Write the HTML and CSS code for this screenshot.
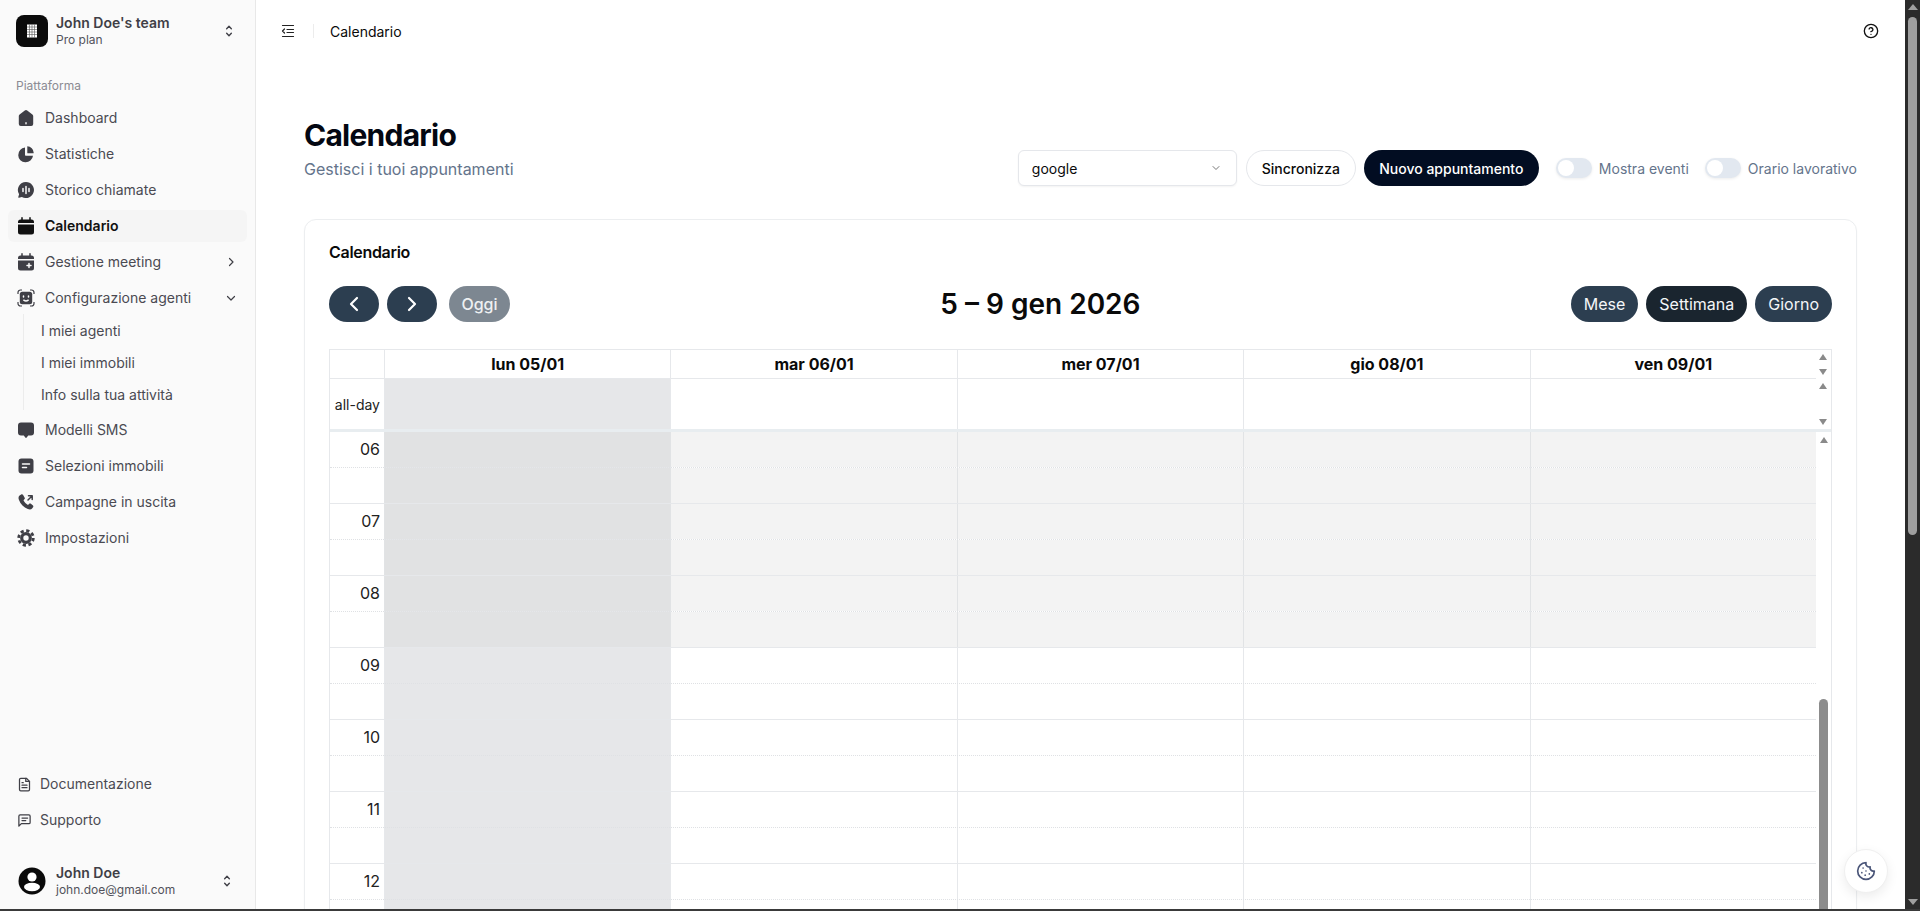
FILE: index.html
```html
<!DOCTYPE html>
<html lang="it">
<head>
<meta charset="UTF-8">
<meta name="viewport" content="width=device-width, initial-scale=1.0">
<title>Calendario</title>
<link rel="stylesheet" href="styles.css">
</head>
<body>

<div class="app">

  <aside class="sidebar">
    <div class="team">
      <div class="team-logo">
        <svg width="12" height="14" viewBox="0 0 12 14"><rect x="1" y="0.5" width="10" height="13" fill="#fff"/><path d="M3.5 .5v13M6 .5v13M8.5 .5v13M1 3h10M1 5.500h10M1 8h10M1 10.500h10" stroke="#555" stroke-width=".6"/></svg>
      </div>
      <div class="team-text">
        <div class="team-name">John Doe's team</div>
        <div class="team-plan">Pro plan</div>
      </div>
      <svg class="updown" width="14" height="16" viewBox="0 0 24 24" fill="none" stroke="#3f3f46" stroke-width="2.400" stroke-linecap="round" stroke-linejoin="round"><path d="m8 16 4 4 4-4"/><path d="m8 8 4-4 4 4"/></svg>
    </div>

    <div class="nav-label">Piattaforma</div>
    <nav class="nav">
      <a class="nav-item">
        <svg class="nav-icon" viewBox="0 0 18 18"><path d="M7.800 1.400a2 2 0 0 1 2.400 0l5.200 4a2 2 0 0 1 .8 1.600V15a2 2 0 0 1-2 2H3.800a2 2 0 0 1-2-2V7a2 2 0 0 1 .8-1.600z"/><rect class="cut" x="8.300" y="13" width="1.400" height="2.400" rx=".7"/></svg>
        Dashboard
      </a>
      <a class="nav-item">
        <svg class="nav-icon" viewBox="0 0 18 18"><path d="M8 2.600a7.400 7.400 0 1 0 8 8.200H8.800a.8.800 0 0 1-.8-.8z"/><path d="M10.300 1.300a6.600 6.600 0 0 1 6.400 6.400.6.600 0 0 1-.6.600h-5.200a.6.600 0 0 1-.6-.6z"/></svg>
        Statistiche
      </a>
      <a class="nav-item">
        <svg class="nav-icon" viewBox="0 0 18 18"><path d="M9 1a8 8 0 1 1-4.100 14.900L2 16.800a.6.600 0 0 1-.7-.8l.8-2.800A8 8 0 0 1 9 1z"/><path class="cut-line" d="M6 7.500v3M9 5.500v7M12 7.500v3"/></svg>
        Storico chiamate
      </a>
      <a class="nav-item active">
        <svg class="nav-icon" viewBox="0 0 18 18"><path d="M5 .8v2.600M13 .8v2.600" stroke="#111" stroke-width="1.500" stroke-linecap="round"/><path d="M3.500 2.500h11a2.500 2.500 0 0 1 2.500 2.500v1H1V5a2.500 2.500 0 0 1 2.500-2.500z"/><path d="M1 7.500h16V15a2.500 2.500 0 0 1-2.500 2.500h-11A2.500 2.500 0 0 1 1 15z"/></svg>
        Calendario
      </a>
      <a class="nav-item">
        <svg class="nav-icon" viewBox="0 0 18 18"><path d="M5 .8v2.600M13 .8v2.600" stroke="#3f3f46" stroke-width="1.500" stroke-linecap="round"/><path d="M3.500 2.500h11a2.500 2.500 0 0 1 2.500 2.500v1H1V5a2.500 2.500 0 0 1 2.500-2.500z"/><path d="M1 7.500h16V15a2.500 2.500 0 0 1-2.500 2.500h-11A2.500 2.500 0 0 1 1 15z"/><path class="cut-line" d="M12 10.500v4M10 12.500h4"/></svg>
        Gestione meeting
        <svg class="nav-chevron" width="12" height="12" viewBox="0 0 24 24"><path d="m9 5 7 7-7 7"/></svg>
      </a>
      <a class="nav-item">
        <svg class="nav-icon" viewBox="0 0 18 18"><path d="M1 5V3.500A2.500 2.500 0 0 1 3.500 1H5M13 1h1.500A2.500 2.500 0 0 1 17 3.500V5M17 13v1.500a2.500 2.500 0 0 1-2.500 2.500H13M5 17H3.500A2.500 2.500 0 0 1 1 14.500V13" fill="none" stroke="#3f3f46" stroke-width="1.200"/><rect x="2.800" y="2.800" width="12.400" height="12.400" rx="2.500"/><path class="cut-line" d="M6.500 7v1M11.500 7v1M6.800 11.200c1.300 1 3.100 1 4.400 0"/></svg>
        Configurazione agenti
        <svg class="nav-chevron" width="12" height="12" viewBox="0 0 24 24"><path d="m5 9 7 7 7-7"/></svg>
      </a>
      <div class="subnav">
        <a class="subnav-item">I miei agenti</a>
        <a class="subnav-item">I miei immobili</a>
        <a class="subnav-item">Info sulla tua attività</a>
      </div>
      <a class="nav-item">
        <svg class="nav-icon" viewBox="0 0 18 18"><path d="M4 1.500h10A3 3 0 0 1 17 4.500v7a3 3 0 0 1-3 3h-2.800L9.700 16.500a.9.900 0 0 1-1.400 0L6.800 14.500H4a3 3 0 0 1-3-3v-7a3 3 0 0 1 3-3z"/></svg>
        Modelli SMS
      </a>
      <a class="nav-item">
        <svg class="nav-icon" viewBox="0 0 18 18"><rect x="1.500" y="1.500" width="15" height="15" rx="3"/><path class="cut-line" d="M5.500 7h7M5.500 10.500h4"/></svg>
        Selezioni immobili
      </a>
      <a class="nav-item">
        <svg class="nav-icon" viewBox="0 0 18 18"><path d="M4.200 1.500 2.600 2.400C1.400 3.300 1.200 5 2 7c1.500 4 4.800 7.500 8.800 9 1.900.7 3.500.5 4.500-.8l.9-1.300c.3-.5.2-1-.2-1.400l-2.400-1.900c-.4-.3-1-.3-1.400.1l-1.200 1.200c-2-1-3.500-2.600-4.500-4.600l1.100-1.200c.4-.4.4-1 .1-1.400L6 1.800c-.4-.6-1.200-.7-1.800-.3z"/><path d="M11 7l4-4M11.500 2.800H15.200V6.500" fill="none" stroke="#3f3f46" stroke-width="1.500" stroke-linecap="round" stroke-linejoin="round" stroke-dasharray="none"/></svg>
        Campagne in uscita
      </a>
      <a class="nav-item">
        <svg class="nav-icon" viewBox="0 0 18 18"><circle cx="9" cy="9" r="7.300" fill="none" stroke="#3f3f46" stroke-width="2.800" stroke-dasharray="3.200 2.530"/><circle cx="9" cy="9" r="4.300" fill="none" stroke="#3f3f46" stroke-width="3.200"/></svg>
        Impostazioni
      </a>
    </nav>

    <div class="sidebar-spacer"></div>

    <nav class="nav-bottom">
      <a class="nav-item small">
        <svg class="nav-icon-line" viewBox="0 0 24 24"><path d="M15 2H6a2 2 0 0 0-2 2v16a2 2 0 0 0 2 2h12a2 2 0 0 0 2-2V7z"/><path d="M14 2v5h6"/><path d="M16 13H8M16 17H8M10 9H8"/></svg>
        Documentazione
      </a>
      <a class="nav-item small">
        <svg class="nav-icon-line" viewBox="0 0 24 24"><path d="M21 15a2 2 0 0 1-2 2H7l-4 4V5a2 2 0 0 1 2-2h14a2 2 0 0 1 2 2z"/><path d="M8 8h9M8 12h6"/></svg>
        Supporto
      </a>
    </nav>

    <div class="user">
      <svg class="avatar" viewBox="0 0 28 28"><circle cx="14" cy="14" r="13.500" fill="#0a0a0a"/><circle cx="14" cy="10" r="4.600" fill="#fff"/><ellipse cx="14" cy="20" rx="8" ry="4.200" fill="#fff"/></svg>
      <div class="user-text">
        <div class="team-name">John Doe</div>
        <div class="team-plan">john.doe@gmail.com</div>
      </div>
      <svg class="updown" width="14" height="16" viewBox="0 0 24 24" fill="none" stroke="#3f3f46" stroke-width="2.400" stroke-linecap="round" stroke-linejoin="round"><path d="m8 16 4 4 4-4"/><path d="m8 8 4-4 4 4"/></svg>
    </div>
  </aside>

  <main class="main">
    <header class="topbar">
      <svg class="topbar-toggle" width="14" height="14" viewBox="0 0 14 14" fill="none" stroke="#222" stroke-width="1.200" stroke-linecap="round" stroke-linejoin="round"><path d="M1.500 1.500h11M6 5.500h6.500M6 8.500h6.500M1.500 12.500h11"/><path d="M3.500 5 1.500 7l2 2"/></svg>
      <span class="topbar-sep"></span>
      <span class="topbar-title">Calendario</span>
      <svg class="topbar-help" width="16" height="16" viewBox="0 0 24 24" fill="none" stroke="#111" stroke-width="2" stroke-linecap="round" stroke-linejoin="round"><circle cx="12" cy="12" r="10"/><path d="M9.100 9a3 3 0 0 1 5.800 1c0 2-3 3-3 3"/><path d="M12 17h.01"/></svg>
    </header>

    <div class="content">
      <div class="page-head">
        <div>
          <h1 class="page-title">Calendario</h1>
          <p class="page-sub">Gestisci i tuoi appuntamenti</p>
        </div>
        <div class="controls">
          <button class="select">
            google
            <svg width="12" height="12" viewBox="0 0 24 24" fill="none" stroke="#777" stroke-width="2" stroke-linecap="round" stroke-linejoin="round"><path d="m6 9 6 6 6-6"/></svg>
          </button>
          <button class="btn btn-outline">Sincronizza</button>
          <button class="btn btn-dark">Nuovo appuntamento</button>
          <label class="switch first"><span class="switch-track"><span class="switch-knob"></span></span>Mostra eventi</label>
          <label class="switch"><span class="switch-track"><span class="switch-knob"></span></span>Orario lavorativo</label>
        </div>
      </div>

      <section class="card">
        <h2 class="card-title">Calendario</h2>

        <div class="cal-toolbar">
          <div class="cal-group">
            <button class="cal-btn cal-arrow"><svg width="14" height="18" viewBox="0 0 14 18" fill="none" stroke="#fff" stroke-width="2.200" stroke-linecap="round" stroke-linejoin="round"><path d="M10 3 4 9l6 6"/></svg></button>
            <button class="cal-btn cal-arrow"><svg width="14" height="18" viewBox="0 0 14 18" fill="none" stroke="#fff" stroke-width="2.200" stroke-linecap="round" stroke-linejoin="round"><path d="m4 3 6 6-6 6"/></svg></button>
            <button class="cal-btn cal-today">Oggi</button>
          </div>
          <div class="cal-title">5 – 9 gen 2026</div>
          <div class="cal-group">
            <button class="cal-btn">Mese</button>
            <button class="cal-btn current">Settimana</button>
            <button class="cal-btn">Giorno</button>
          </div>
        </div>

        <div class="cal">
          <div class="cal-row cal-head">
            <div class="cell"></div>
            <div class="cell">lun 05/01</div>
            <div class="cell">mar 06/01</div>
            <div class="cell">mer 07/01</div>
            <div class="cell">gio 08/01</div>
            <div class="cell">ven 09/01</div>
            <div class="gutter between"><span class="tri-up"></span><span class="tri-down"></span></div>
          </div>
          <div class="cal-row cal-allday">
            <div class="cell axis-small">all-day</div>
            <div class="cell past"></div>
            <div class="cell"></div>
            <div class="cell"></div>
            <div class="cell"></div>
            <div class="cell"></div>
            <div class="gutter between"><span class="tri-up"></span><span class="tri-down"></span></div>
          </div>

          <div class="cal-body">
            <div class="slots">
              <div class="day-cols">
                <div class="day past"></div>
                <div class="day"></div>
                <div class="day"></div>
                <div class="day"></div>
                <div class="day"></div>
              </div>
              <div class="slot hour off"><div class="slot-axis">06</div><div class="lane"></div></div>
              <div class="slot off"><div class="slot-axis"></div><div class="lane"></div></div>
              <div class="slot hour off"><div class="slot-axis">07</div><div class="lane"></div></div>
              <div class="slot off"><div class="slot-axis"></div><div class="lane"></div></div>
              <div class="slot hour off"><div class="slot-axis">08</div><div class="lane"></div></div>
              <div class="slot off"><div class="slot-axis"></div><div class="lane"></div></div>
              <div class="slot hour"><div class="slot-axis">09</div><div class="lane"></div></div>
              <div class="slot"><div class="slot-axis"></div><div class="lane"></div></div>
              <div class="slot hour"><div class="slot-axis">10</div><div class="lane"></div></div>
              <div class="slot"><div class="slot-axis"></div><div class="lane"></div></div>
              <div class="slot hour"><div class="slot-axis">11</div><div class="lane"></div></div>
              <div class="slot"><div class="slot-axis"></div><div class="lane"></div></div>
              <div class="slot hour"><div class="slot-axis">12</div><div class="lane"></div></div>
              <div class="slot"><div class="slot-axis"></div><div class="lane"></div></div>
            </div>
            <div class="gutter body-gutter">
              <span class="tri-up"></span>
              <span class="inner-thumb"></span>
            </div>
          </div>
        </div>
      </section>
    </div>

    <button class="cookie">
      <svg width="20" height="20" viewBox="0 0 24 24" fill="none" stroke="#4a5578" stroke-width="2" stroke-linecap="round" stroke-linejoin="round"><path d="M12 2a10 10 0 1 0 10 10 4 4 0 0 1-5-5 4 4 0 0 1-5-5"/><path d="M8.500 8.500v.01M16 15.500v.01M12 12v.01M11 17v.01M7 14v.01"/></svg>
    </button>
  </main>

  <div class="page-scroll">
    <span class="tri-up"></span>
    <span class="page-thumb"></span>
    <span class="tri-down"></span>
  </div>

</div>

</body>
</html>
```
FILE: styles.css
```css
* {
  box-sizing: border-box;
}
html, body {
  margin: 0;
  padding: 0;
  height: 100%;
  overflow: hidden;
}
body {
  font-family: Inter, 'Liberation Sans', sans-serif;
  font-size: 14px;
  color: #0a0a0a;
  background-color: #fff;
}
button {
  font-family: inherit;
  cursor: pointer;
}
.app {
  display: flex;
  height: 911px;
  overflow: hidden;
  border-bottom: 2px solid #3a3a3a;
}

/* sidebar */
.sidebar {
  width: 256px;
  flex-shrink: 0;
  display: flex;
  flex-direction: column;
  background-color: #fafafa;
  border-right: 1px solid #e8e8e8;
}
.team {
  display: flex;
  align-items: center;
  height: 32px;
  margin: 15px 0 0 16px;
  padding-right: 16px;
}
.team-logo {
  width: 32px;
  height: 32px;
  border-radius: 8px;
  background-color: #0b0b0b;
  display: flex;
  align-items: center;
  justify-content: center;
  flex-shrink: 0;
}
.team-text {
  margin-left: 8px;
  flex: 1;
}
.team-name {
  font-size: 14px;
  font-weight: 600;
  line-height: 18px;
  color: #3f3f46;
}
.team-plan {
  font-size: 12px;
  line-height: 16px;
  color: #52525b;
}
.updown {
  margin-right: 3px;
}
.nav-label {
  margin: 31px 0 0 16px;
  font-size: 12px;
  line-height: 16px;
  color: #8b8b93;
}
.nav, .nav-bottom {
  display: flex;
  flex-direction: column;
  gap: 4px;
  padding: 0 8px;
}
.nav {
  margin-top: 8px;
}
.nav-item {
  display: flex;
  align-items: center;
  height: 32px;
  padding: 0 9px;
  border-radius: 6px;
  color: #4a4a52;
  line-height: 20px;
}
.nav-item.active {
  background-color: #f5f5f5;
  color: #111;
  font-weight: 600;
}
.nav-item.active .nav-icon {
  fill: #111;
}
.nav-icon {
  width: 18px;
  height: 18px;
  margin-right: 10px;
  fill: #3f3f46;
  flex-shrink: 0;
}
.nav-icon .cut {
  fill: #fafafa;
}
.nav-icon .cut-line {
  fill: none;
  stroke: #fafafa;
  stroke-width: 1.500;
  stroke-linecap: round;
}
.nav-chevron {
  margin-left: auto;
  margin-right: 1px;
  fill: none;
  stroke: #3f3f46;
  stroke-width: 2.400;
  stroke-linecap: round;
  stroke-linejoin: round;
}
.subnav {
  display: flex;
  flex-direction: column;
  margin: -4px 0 0 15px;
  padding-left: 17px;
  border-left: 1px solid #ececec;
}
.subnav-item {
  height: 32px;
  display: flex;
  align-items: center;
  color: #4a4a52;
}
.sidebar-spacer {
  flex: 1;
}
.nav-item.small {
  padding-left: 9px;
}
.nav-icon-line {
  width: 15px;
  height: 15px;
  margin-right: 8px;
  fill: none;
  stroke: #3f3f46;
  stroke-width: 2;
  stroke-linecap: round;
  stroke-linejoin: round;
}
.user {
  display: flex;
  align-items: center;
  height: 32px;
  margin: 29px 0 12px 18px;
  padding-right: 18px;
}
.avatar {
  width: 28px;
  height: 28px;
  flex-shrink: 0;
}
.user-text {
  margin-left: 10px;
  flex: 1;
}

/* main column */
.main {
  position: relative;
  flex: 1;
  min-width: 0;
}
.topbar {
  display: flex;
  align-items: center;
  height: 62px;
  padding: 0 26px 0 25px;
}
.topbar-sep {
  width: 1px;
  height: 14px;
  margin: 0 16px 0 18px;
  background-color: #ececec;
}
.topbar-help {
  margin-left: auto;
}
.content {
  padding: 55px 48px 0;
}
.page-head {
  display: flex;
  justify-content: space-between;
  align-items: flex-end;
  height: 69px;
}
.page-title {
  margin: 0;
  font-size: 30px;
  font-weight: 700;
  line-height: 36px;
  letter-spacing: -0.75px;
  color: #030712;
}
.page-sub {
  margin: 4px 0 5px;
  font-size: 16px;
  line-height: 24px;
  color: #64748b;
}
.controls {
  display: flex;
  align-items: center;
}
.select {
  width: 219px;
  height: 36px;
  padding: 0 14px 0 13px;
  display: flex;
  align-items: center;
  justify-content: space-between;
  background-color: #fff;
  border: 1px solid #e5e7eb;
  border-radius: 6px;
  box-shadow: 0 1px 2px rgba(0, 0, 0, 0.05);
  font-size: 14px;
  color: #0a0a0a;
}
.btn {
  height: 36px;
  border-radius: 18px;
  font-size: 14px;
  font-weight: 500;
}
.btn-outline {
  width: 110px;
  margin-left: 9px;
  background-color: #fff;
  border: 1px solid #e5e7eb;
  color: #0a0a0a;
}
.btn-dark {
  width: 175px;
  margin-left: 8px;
  background-color: #020d22;
  border: none;
  color: #fff;
}
.switch {
  display: flex;
  align-items: center;
  margin-left: 16px;
  color: #64748b;
}
.switch.first {
  margin-left: 17px;
}
.switch-track {
  width: 36px;
  height: 20px;
  margin-right: 7px;
  padding: 2px;
  border-radius: 10px;
  background-color: #e2e8f0;
  box-shadow: 0 1px 3px rgba(0, 0, 0, 0.08);
}
.switch-knob {
  display: block;
  width: 16px;
  height: 16px;
  border-radius: 50%;
  background-color: #fff;
}

/* calendar card */
.card {
  margin-top: 33px;
  padding: 24px 24px 40px;
  background-color: #fff;
  border: 1px solid #eceef0;
  border-radius: 12px;
  box-shadow: 0 1px 2px rgba(0, 0, 0, 0.03);
}
.card-title {
  margin: 0;
  font-size: 16px;
  font-weight: 600;
  line-height: 16px;
  color: #0a0a0a;
  letter-spacing: -0.3px;
}
.cal-toolbar {
  display: flex;
  justify-content: space-between;
  align-items: center;
  margin-top: 26px;
}
.cal-group {
  display: flex;
  gap: 8px;
}
.cal-title {
  font-size: 28px;
  font-weight: 600;
  line-height: 36px;
  color: #0a0a0a;
}
.cal-btn {
  height: 36px;
  padding: 0 13px;
  border: none;
  border-radius: 18px;
  background-color: #2c3e50;
  color: #f4f6f8;
  font-size: 16px;
  display: flex;
  align-items: center;
  justify-content: center;
}
.cal-arrow {
  width: 50px;
}
.cal-btn.current {
  background-color: #1a252f;
}
.cal-today {
  margin-left: 4px;
  width: 61px;
  background-color: #7d8791;
  font-weight: 500;
  color: #eef0f2;
}
.cal {
  margin-top: 27px;
  border: 1px solid #e6e8eb;
  border-bottom: none;
}
.cal-row {
  display: grid;
  grid-template-columns: 54px repeat(5, 1fr) 15px;
}
.cell {
  border-left: 1px solid #e6e8eb;
  border-bottom: 1px solid #e6e8eb;
  display: flex;
  align-items: center;
  justify-content: center;
}
.cell:first-child {
  border-left: none;
}
.cal-head {
  height: 29px;
  font-size: 16px;
  font-weight: 700;
  color: #0a0a0a;
}
.cal-head .cell {
  padding-bottom: 1px;
}
.cal-allday {
  height: 50px;
}
.cal-allday .cell {
  border-bottom: none;
}
.axis-small {
  justify-content: flex-end;
  padding-right: 4px;
  font-size: 14px;
  color: #222;
}
.cell.past, .day.past {
  background-color: #e6e7e9;
}
.gutter {
  display: flex;
  flex-direction: column;
  align-items: center;
}
.gutter.between {
  justify-content: space-between;
  padding: 4px 0;
}
.tri-up, .tri-down {
  width: 0;
  height: 0;
  border-left: 4.5px solid transparent;
  border-right: 4.5px solid transparent;
  flex-shrink: 0;
}
.tri-up {
  border-bottom: 6px solid #8a8a8a;
}
.tri-down {
  border-top: 6px solid #8a8a8a;
}
.cal-body {
  display: flex;
  border-top: 3px solid #e8edf0;
}
.slots {
  position: relative;
  flex: 1;
}
.day-cols {
  position: absolute;
  top: 0;
  bottom: 0;
  left: 54px;
  right: 0;
  display: grid;
  grid-template-columns: repeat(5, 1fr);
}
.day {
  border-left: 1px solid #e6e8eb;
}
.slot {
  position: relative;
  display: flex;
  height: 36px;
  border-bottom: 1px dotted #dfe1e4;
}
.slot.hour {
  border-bottom-style: dotted;
}
.slot:not(.hour) {
  border-bottom: 1px solid #e6e8eb;
}
.slot-axis {
  width: 54px;
  padding-right: 4px;
  text-align: right;
  font-size: 16px;
  line-height: 34px;
  color: #222;
}
.lane {
  flex: 1;
}
.slot.off .lane {
  background-color: rgba(215, 215, 215, 0.3);
}
.body-gutter {
  width: 15px;
  padding-top: 5px;
}
.inner-thumb {
  width: 9px;
  height: 400px;
  margin-top: 256px;
  border-radius: 5px 5px 0 0;
  background-color: #8c8c8c;
  flex-shrink: 0;
}

.cookie {
  position: absolute;
  right: 17px;
  bottom: 16px;
  width: 44px;
  height: 44px;
  border: 1px solid #f0f0f0;
  border-radius: 50%;
  background-color: #fff;
  box-shadow: 0 4px 12px rgba(0, 0, 0, 0.08);
  display: flex;
  align-items: center;
  justify-content: center;
  padding: 0;
}

/* page scrollbar */
.page-scroll {
  width: 15px;
  flex-shrink: 0;
  display: flex;
  flex-direction: column;
  align-items: center;
  padding: 4px 0 4px;
  background-color: #2b2b2b;
}
.page-scroll .tri-up, .page-scroll .tri-down {
  border-left-width: 5px;
  border-right-width: 5px;
  border-top-color: #9f9f9f;
  border-bottom-color: #9f9f9f;
}
.page-thumb {
  width: 9px;
  height: 518px;
  margin-top: 7px;
  border-radius: 5px;
  background-color: #9f9f9f;
}
.page-scroll .tri-down {
  margin-top: auto;
}
```
